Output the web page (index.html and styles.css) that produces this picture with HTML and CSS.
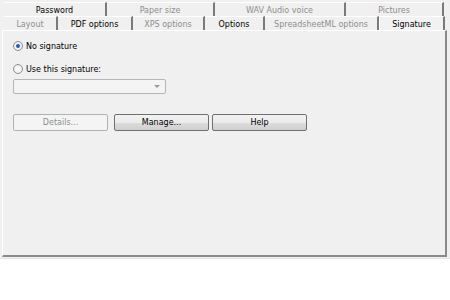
FILE: index.html
```html
<!DOCTYPE html>
<html>
	<head>
		<meta charset="utf-8">
		<title>Signature</title>
		<link rel="stylesheet" href="styles.css">
	</head>
	<body>
		<div class="dialog">
			<div class="tabs">
				<div class="row back">
					<span class="tab on w-password">Password</span>
					<span class="tab w-paper">Paper size</span>
					<span class="tab w-wav">WAV Audio voice</span>
					<span class="tab w-pictures">Pictures</span>
				</div>
				<div class="row front">
					<span class="tab w-layout">Layout</span>
					<span class="tab on w-pdf">PDF options</span>
					<span class="tab w-xps">XPS options</span>
					<span class="tab on w-options">Options</span>
					<span class="tab w-sheet">SpreadsheetML options</span>
					<span class="tab on active w-sign">Signature</span>
				</div>
			</div>
			<div class="panel">
				<label class="radio"><span class="dot checked"></span>No signature</label>
				<label class="radio"><span class="dot"></span>Use this signature:</label>
				<div class="combo"><span class="arrow"></span></div>
				<div class="buttons">
					<span class="btn disabled">Details...</span>
					<span class="btn manage">Manage...</span>
					<span class="btn help">Help</span>
				</div>
			</div>
		</div>
	</body>
</html>
```

FILE: styles.css
```css
* {
	margin: 0;
	padding: 0;
	box-sizing: border-box;
}

body {
	background-color: #FFFFFF;
	font-family: "DejaVu Sans", sans-serif;
	font-size: 8px;
	color: #000000;
}

.dialog {
	width: 450px;
	height: 259px;
	background-color: #F0F0F0;
	padding: 2px 3px 0 2px;
	border-bottom: 1px solid #E4E4E4;
}

.tabs {
	padding-left: 2px;
}

.row {
	display: flex;
	height: 14px;
}

.tab {
	display: flex;
	align-items: center;
	justify-content: center;
	padding-top: 2px;
	color: #8E8E8E;
	border-right: 2px solid #7A7A7A;
	border-top: 1px solid #FFFFFF;
	background-color: #F0F0F0;
}

.tab.on {
	color: #000000;
}

.tab.active {
	background-color: #F2F2F2;
	border-left: 1px solid #FFFFFF;
}

.w-password { width: 103px; }
.w-paper { width: 108px; }
.w-wav { width: 131px; }
.w-pictures { width: 98px; }

.w-layout { width: 54px; }
.w-pdf { width: 75px; }
.w-xps { width: 72px; }
.w-options { width: 60px; }
.w-sheet { width: 114px; }
.w-sign { width: 66px; }

.panel {
	height: 227px;
	border-left: 1px solid #FFFFFF;
	border-top: 1px solid #FFFFFF;
	border-right: 2px solid #8A8A8A;
	border-bottom: 2px solid #8A8A8A;
	padding: 9px 0 0 10px;
	display: flex;
	flex-direction: column;
}

.radio {
	display: flex;
	align-items: center;
	gap: 3px;
	height: 12px;
}

.radio + .radio {
	margin-top: 11px;
}

.dot {
	width: 10px;
	height: 10px;
	border-radius: 50%;
	border: 1px solid #8F8F8F;
	background: radial-gradient(circle, #FFFFFF 0%, #E6E6E6 100%);
	display: flex;
	align-items: center;
	justify-content: center;
}

.dot.checked::after {
	content: "";
	width: 4px;
	height: 4px;
	border-radius: 50%;
	background-color: #1E5FB4;
}

.combo {
	width: 153px;
	height: 15px;
	margin-top: 4px;
	border: 1px solid #B5B5B5;
	border-radius: 2px;
	background-color: #F4F4F4;
	display: flex;
	align-items: center;
	justify-content: flex-end;
	padding-right: 5px;
}

.arrow {
	border-left: 3px solid transparent;
	border-right: 3px solid transparent;
	border-top: 3px solid #9A9A9A;
}

.buttons {
	display: flex;
	margin-top: 20px;
}

.btn {
	width: 95px;
	height: 17px;
	display: flex;
	align-items: center;
	justify-content: center;
	border: 1px solid #707070;
	border-radius: 2px;
	background: linear-gradient(#F2F2F2 0%, #EBEBEB 50%, #DDDDDD 51%, #CFCFCF 100%);
}

.btn.manage {
	margin-left: 6px;
}

.btn.help {
	margin-left: 3px;
}

.btn.disabled {
	border-color: #ADB2B5;
	background: #F4F4F4;
	color: #8E8E8E;
}
```
